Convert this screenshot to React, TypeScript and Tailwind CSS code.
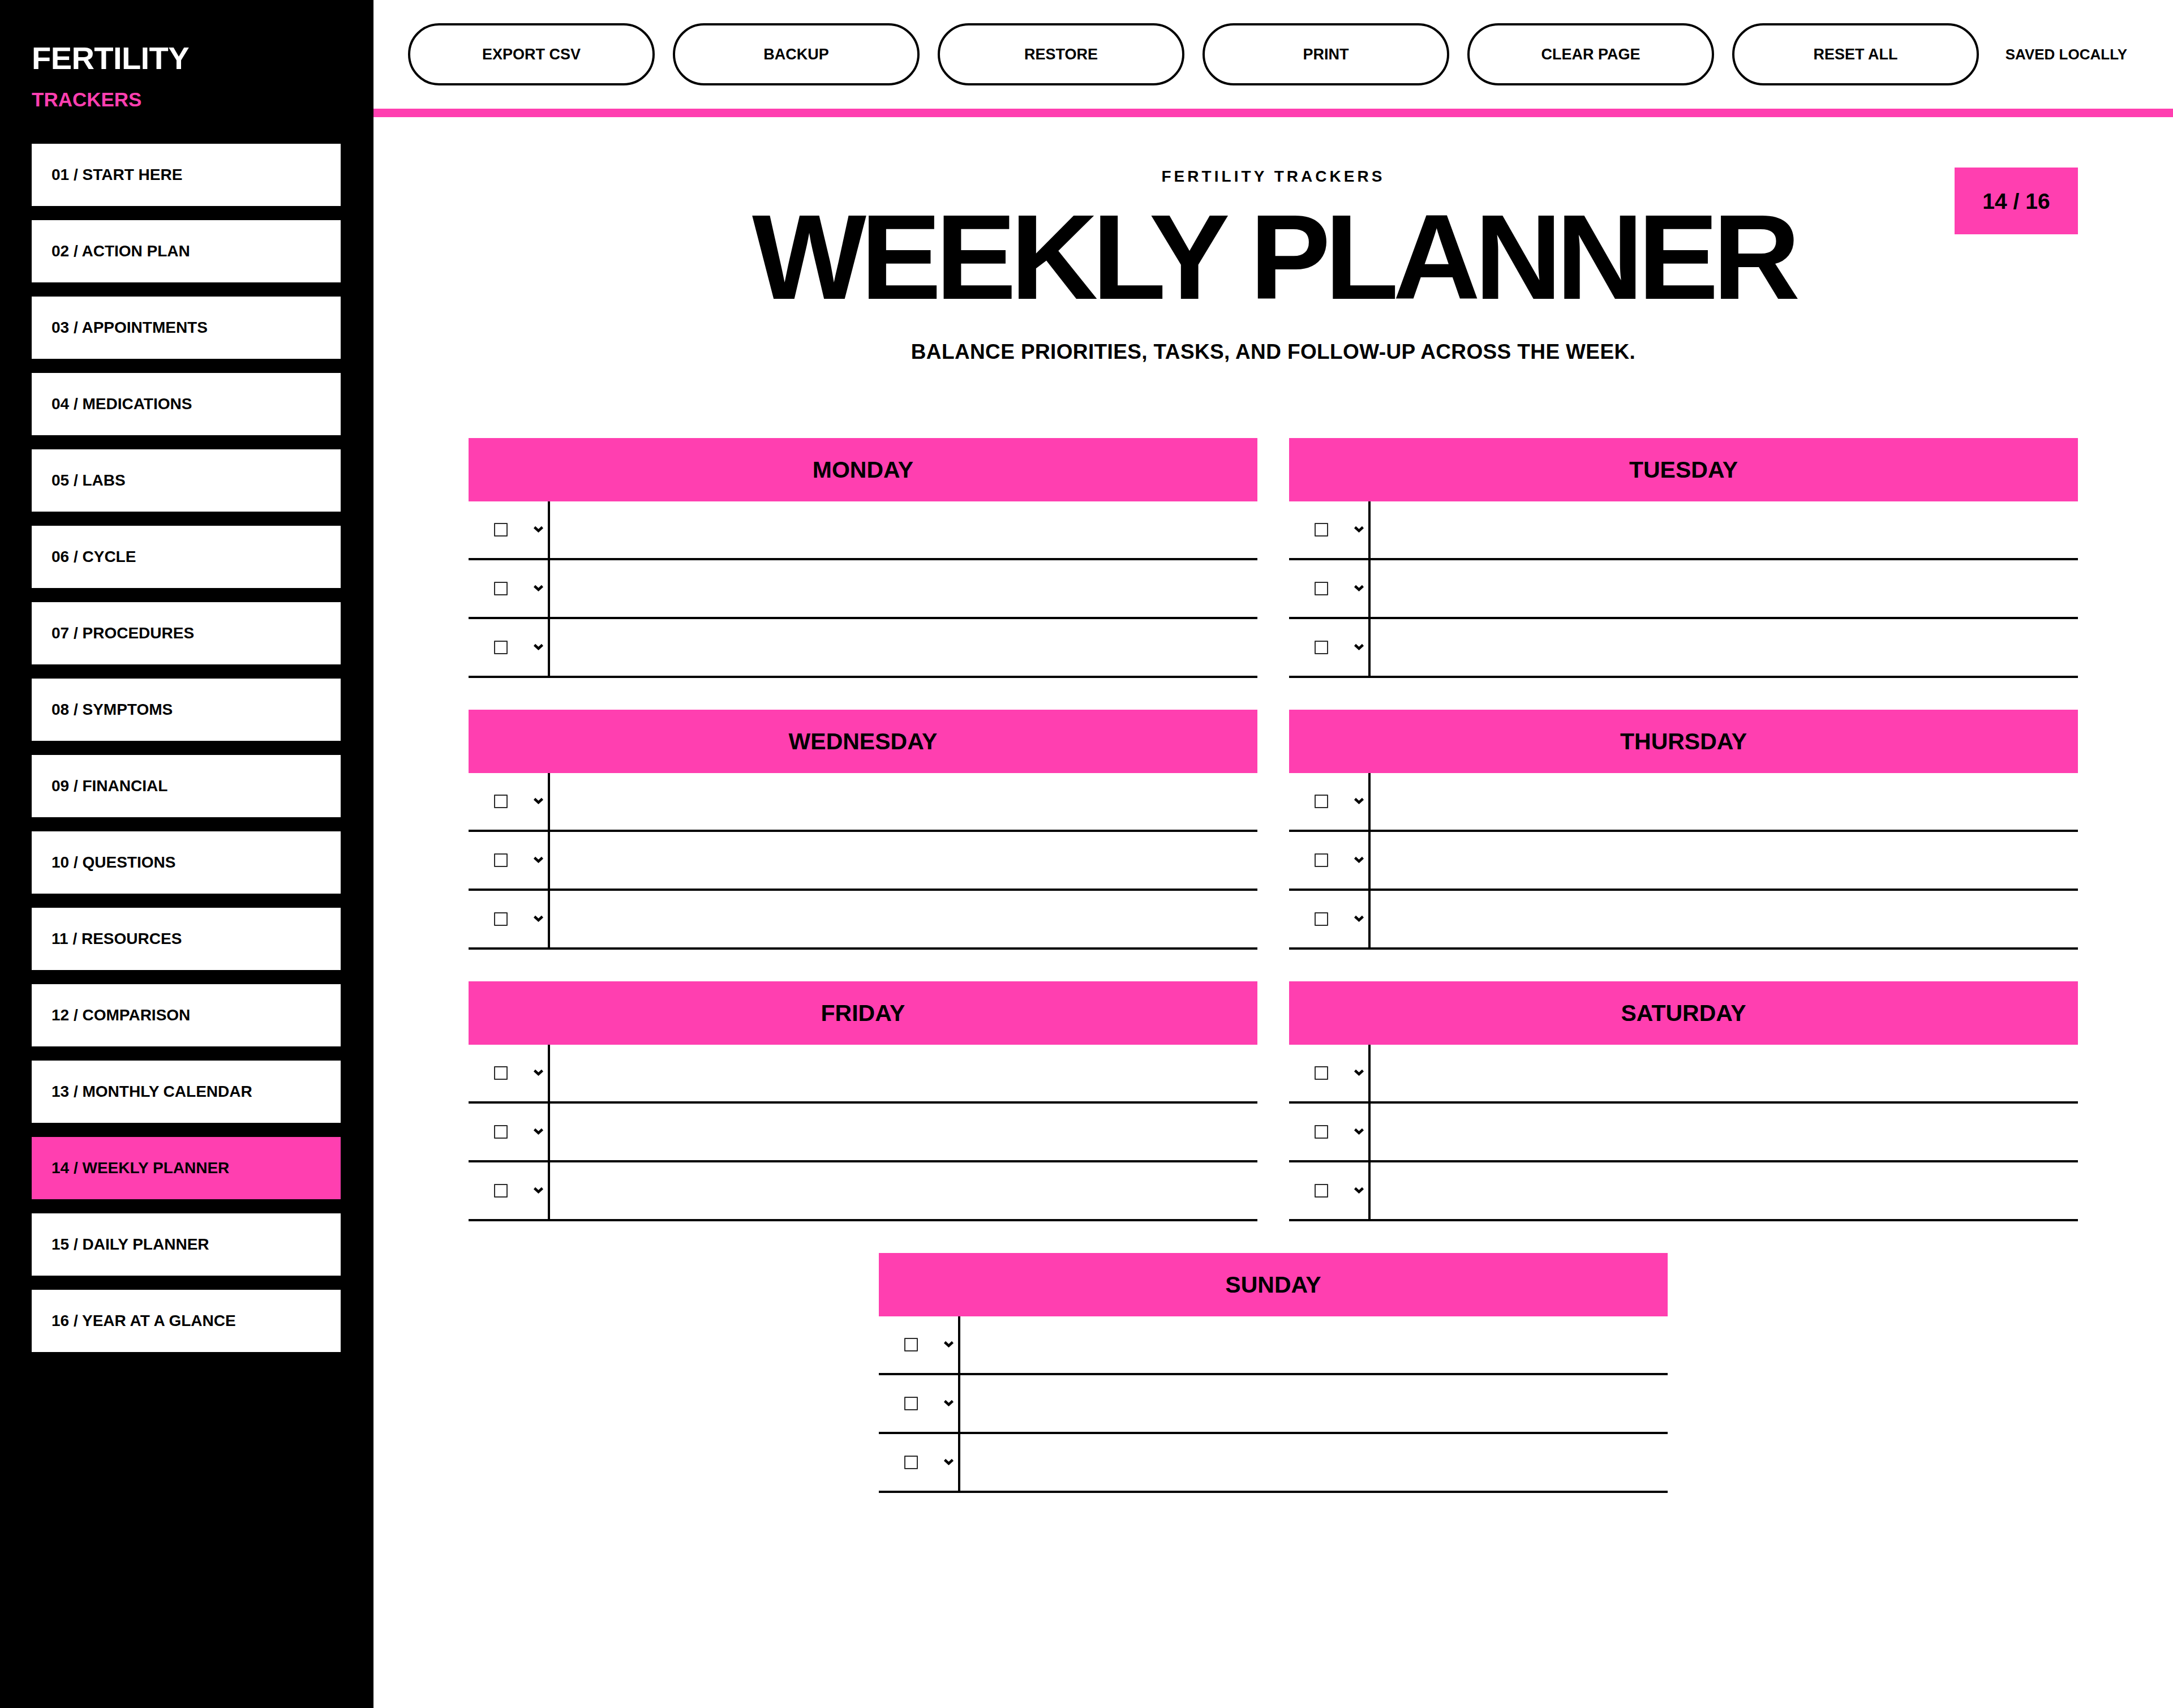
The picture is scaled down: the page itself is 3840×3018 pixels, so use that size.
import { useState } from "react";

const sections = [
  "01 / START HERE",
  "02 / ACTION PLAN",
  "03 / APPOINTMENTS",
  "04 / MEDICATIONS",
  "05 / LABS",
  "06 / CYCLE",
  "07 / PROCEDURES",
  "08 / SYMPTOMS",
  "09 / FINANCIAL",
  "10 / QUESTIONS",
  "11 / RESOURCES",
  "12 / COMPARISON",
  "13 / MONTHLY CALENDAR",
  "14 / WEEKLY PLANNER",
  "15 / DAILY PLANNER",
  "16 / YEAR AT A GLANCE",
];

const actions = ["EXPORT CSV", "BACKUP", "RESTORE", "PRINT", "CLEAR PAGE", "RESET ALL"];

const weekdays = ["MONDAY", "TUESDAY", "WEDNESDAY", "THURSDAY", "FRIDAY", "SATURDAY"];

function Chevron() {
  return (
    <svg width="19" height="12" viewBox="0 0 19 12" fill="none" className="shrink-0">
      <polyline
        points="2.5,2.5 9.5,9 16.5,2.5"
        stroke="black"
        strokeWidth="4.5"
        strokeLinecap="butt"
        strokeLinejoin="miter"
      />
    </svg>
  );
}

function TaskRow() {
  const [done, setDone] = useState(false);
  return (
    <div className="flex h-[104px] border-b-4 border-black">
      <div className="flex w-[144px] shrink-0 items-center border-r-4 border-black pl-[45px] pr-[7px]">
        <input
          type="checkbox"
          checked={done}
          onChange={() => setDone(!done)}
          className="h-[24px] w-[24px] appearance-none rounded-[1px] border-2 border-[#2b2b2b] bg-white checked:bg-black"
        />
        <div className="ml-auto mt-[-3px]">
          <Chevron />
        </div>
      </div>
      <input type="text" className="min-w-0 flex-1 bg-white px-[20px] text-[28px] outline-none" />
    </div>
  );
}

function DayCard({ name, className = "" }: { name: string; className?: string }) {
  return (
    <section className={className}>
      <h2 className="flex h-[112px] items-center justify-center bg-[#ff3fb0] text-[41px] font-bold leading-none text-black">
        {name}
      </h2>
      <TaskRow />
      <TaskRow />
      <TaskRow />
    </section>
  );
}

export default function App() {
  const active = "14 / WEEKLY PLANNER";

  return (
    <div className="flex min-h-screen w-full bg-white font-['Liberation_Sans',Arial,sans-serif] text-black">
      <aside className="flex w-[660px] shrink-0 flex-col bg-black pl-[56px] pr-[58px] pt-[75px]">
        <h1 className="text-[56px] font-bold leading-none tracking-[-0.01em] text-white">FERTILITY</h1>
        <p className="mt-[27px] text-[35px] font-bold leading-none text-[#ff3fb0]">TRACKERS</p>
        <nav className="mt-[61px] flex flex-col gap-[25px]">
          {sections.map((s) => (
            <a
              key={s}
              className={`flex h-[110px] items-center pl-[35px] text-[28px] font-bold leading-none text-black ${
                s === active ? "bg-[#ff3fb0]" : "bg-white"
              }`}
            >
              {s}
            </a>
          ))}
        </nav>
      </aside>

      <main className="flex min-w-0 flex-1 flex-col">
        <header className="flex h-[192px] items-center pl-[61px] pr-[81px]">
          <div className="flex gap-[32px]">
            {actions.map((a) => (
              <button
                key={a}
                className="flex h-[110px] w-[436px] items-center justify-center rounded-full border-4 border-black bg-white text-[27px] font-bold leading-none"
              >
                {a}
              </button>
            ))}
          </div>
          <span className="ml-auto text-[26px] font-bold leading-none">SAVED LOCALLY</span>
        </header>
        <div className="h-[15px] bg-[#ff3fb0]" />

        <div className="px-[168px] pb-[120px] pt-[91px]">
          <div className="relative flex flex-col items-center">
            <p className="text-[28px] font-bold leading-none tracking-[0.18em]">FERTILITY TRACKERS</p>
            <h1 className="mt-[21px] text-[214px] font-bold leading-none tracking-[-0.048em]">WEEKLY PLANNER</h1>
            <p className="mt-[42px] text-[37px] font-bold leading-none tracking-[0.01em]">
              BALANCE PRIORITIES, TASKS, AND FOLLOW-UP ACROSS THE WEEK.
            </p>
            <div className="absolute right-0 top-[-2px] flex h-[118px] w-[218px] items-center justify-center bg-[#ff3fb0] text-[39px] font-bold leading-none">
              14 / 16
            </div>
          </div>

          <div className="mt-[134px] grid grid-cols-2 gap-[56px]">
            {weekdays.map((d) => (
              <DayCard key={d} name={d} />
            ))}
            <DayCard name="SUNDAY" className="col-span-2 w-[calc((100%-56px)/2)] justify-self-center" />
          </div>
        </div>
      </main>
    </div>
  );
}
